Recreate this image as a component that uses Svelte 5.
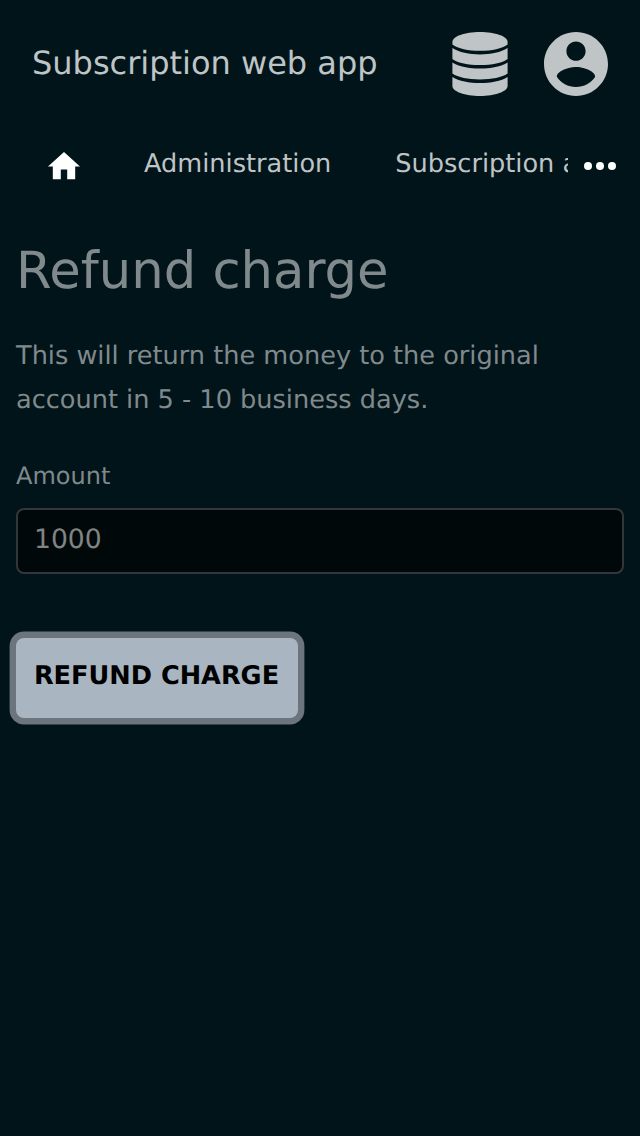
<script>
  let amount = $state('1000');
  const links = ['Administration', 'Subscription administration'];
</script>

<div class="app">
  <header>
    <span class="brand">Subscription web app</span>
    <div class="tools">
      <svg class="database" viewBox="0 0 56 64" aria-hidden="true">
        <path d="M.4 10C.4 4.400 12.700 0 28 0s27.600 4.400 27.600 10v2.500C50 16.700 40 18.800 28 18.800S6 16.700.4 12.500z" />
        <path d="M.4 16C7 20.300 17 22.400 28 22.400S49 20.300 55.600 16v11C50 31 40 33.100 28 33.100S6 31 .4 27z" />
        <path d="M.4 30.500C7 34.700 17 36.600 28 36.600S49 34.700 55.600 30.500v11C50 45.500 40 47.400 28 47.400S6 45.500.4 41.500z" />
        <path d="M.4 45C7 49.200 17 51.100 28 51.100S49 49.200 55.600 45v9C55.600 59.600 43 64 28 64S.4 59.600.4 54z" />
      </svg>
      <svg class="account" viewBox="2 2 20 20" aria-hidden="true">
        <path d="M12 2C6.480 2 2 6.480 2 12s4.480 10 10 10 10-4.480 10-10S17.520 2 12 2zm0 3c1.660 0 3 1.340 3 3s-1.340 3-3 3-3-1.340-3-3 1.340-3 3-3zm0 14.200c-2.500 0-4.710-1.280-6-3.220.030-1.990 4-3.080 6-3.080s5.970 1.090 6 3.080c-1.290 1.940-3.500 3.220-6 3.220z" />
      </svg>
    </div>
  </header>

  <nav>
    <div class="links">
      <svg class="home" viewBox="2 3 20 17" aria-hidden="true"><path d="M10 20v-6h4v6h5v-8h3L12 3 2 12h3v8z" /></svg>
      {#each links as link}
        <span class="link">{link}</span>
      {/each}
    </div>
    <svg class="more" viewBox="0 0 32 8" aria-hidden="true">
      <circle cx="4" cy="4" r="4" /><circle cx="16" cy="4" r="4" /><circle cx="28" cy="4" r="4" />
    </svg>
  </nav>

  <main>
    <h1>Refund charge</h1>
    <p>This will return the money to the original account in 5 - 10 business days.</p>
    <label for="amount">Amount</label>
    <input id="amount" bind:value={amount} />
    <button type="button">REFUND CHARGE</button>
  </main>
</div>

<style>
  :global(body) {
    background: #001419;
  }
  .app {
    min-height: 1136px;
    background: #001419;
    color: #808a8c;
    font-family: 'DejaVu Sans', sans-serif;
    text-rendering: geometricPrecision;
    overflow: hidden;
  }
  header {
    height: 128px;
    box-sizing: border-box;
    padding: 0 32px;
    display: flex;
    align-items: center;
    justify-content: space-between;
    color: #bfc4c6;
  }
  .brand {
    padding-bottom: 2px;
    font-size: 32px;
    line-height: 40px;
    white-space: nowrap;
  }
  .tools {
    display: flex;
    align-items: center;
    gap: 36px;
  }
  svg {
    display: block;
    flex: none;
    fill: currentColor;
  }
  .database {
    width: 56px;
    height: 64px;
  }
  .account {
    width: 64px;
    height: 64px;
  }
  nav {
    height: 76px;
    display: flex;
    align-items: center;
    color: #bfc4c6;
  }
  .links {
    width: 568px;
    height: 76px;
    box-sizing: border-box;
    padding-left: 48px;
    display: flex;
    align-items: center;
    gap: 64px;
    overflow: hidden;
  }
  .home {
    width: 32px;
    height: 27.200px;
    color: #fff;
  }
  .link {
    font-size: 25.600px;
    line-height: 32px;
    padding-bottom: 4px;
    white-space: nowrap;
  }
  .more {
    width: 32px;
    height: 8px;
    margin-left: 16px;
    color: #fff;
  }
  main {
    padding: 37px 16px 0;
    display: flex;
    flex-direction: column;
    align-items: flex-start;
  }
  h1 {
    margin: 0;
    font-size: 51.200px;
    line-height: 60px;
    font-weight: 400;
  }
  p {
    margin: 33px 0 0;
    font-size: 25.600px;
    line-height: 44px;
  }
  label {
    margin-top: 38px;
    font-size: 24px;
    line-height: 32px;
  }
  input {
    width: 100%;
    height: 66px;
    box-sizing: border-box;
    margin-top: 16px;
    padding: 0 16px 4px;
    border: 2px solid #33373c;
    border-radius: 8px;
    background: #00080a;
    color: #808482;
    font: 26.600px 'DejaVu Sans', sans-serif;
    text-rendering: inherit;
    outline: none;
  }
  button {
    width: 282px;
    height: 80px;
    margin-top: 64px;
    padding: 0 1px 4px 0;
    border: 0;
    border-radius: 8px;
    background: #a9b5c1;
    box-shadow: 0 0 0 6.400px #6c747e;
    color: #000;
    font: bold 25.600px 'DejaVu Sans', sans-serif;
    text-rendering: inherit;
    white-space: nowrap;
  }
</style>
